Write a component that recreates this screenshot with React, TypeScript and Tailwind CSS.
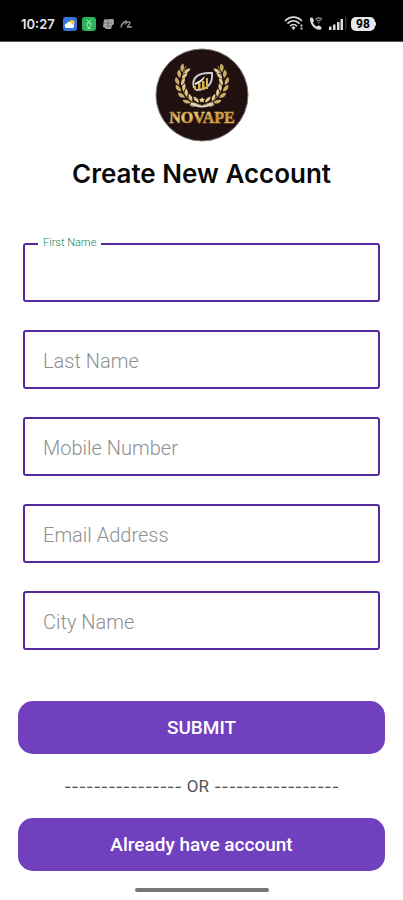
import type { InputHTMLAttributes } from "react";

function StatusBar() {
  return (
    <header className="flex h-[42px] items-center justify-between border-b border-neutral-600 bg-black pt-[6px] pr-[27px] pl-[21px] text-gray-200">
      <div className="flex items-center gap-[5px]">
        <span className="mr-[3px] font-[Inter,sans-serif] text-[13px] leading-4 font-semibold">10:27</span>
        {/* weather */}
        <svg className="size-[14px]" viewBox="0 0 14 14" aria-hidden="true">
          <rect width="14" height="14" rx="3" fill="#3475db" />
          <circle cx="9" cy="5.5" r="2.6" fill="#f5c451" />
          <path d="M3.500 11a2.300 2.300 0 0 1 0-4.500 3 3 0 0 1 5.600.7A2 2 0 0 1 10 11z" fill="#fff" />
        </svg>
        <svg className="size-[14px]" viewBox="0 0 14 14" aria-hidden="true">
          <rect width="14" height="14" rx="3" fill="#29b35b" />
          <path d="M4.500 2.500 7 5l2.500-2.500M5 6h4v2.500L7 11 5 8.500zM5 11.500h4" fill="none" stroke="#9be8b2" strokeWidth="1" />
        </svg>
        <svg className="ml-px h-3 w-[13px]" viewBox="0 0 13 12" aria-hidden="true">
          <path d="M2 1.500 11.500 1 12 6 10 7.500 9 11H4L3.500 10 1 9z" fill="#aaa" />
          <path d="M2 5h8M6 2v8M4 8h6" stroke="#666" strokeWidth=".7" />
        </svg>
        <svg className="h-3 w-3" viewBox="0 0 12 12" aria-hidden="true">
          <path d="M1 9.500C1.500 6 4 3.500 7 3M5 6.500C6 4 10 3 10 5c0 1.500-2 2-2.500 4H12" fill="none" stroke="#999" strokeWidth="1.300" />
        </svg>
      </div>
      <div className="flex items-center">
        <svg className="mr-[5px] h-[15px] w-5" viewBox="0 0 20 15" fill="none" stroke="#ddd" strokeWidth="1.600" aria-hidden="true">
          <path d="M1 5C6-.2 13-.2 18 5M3.400 7.600c3.700-3.600 8.500-3.600 12.200 0M6 10.200c2.200-2.200 4.800-2.200 7 0" />
          <path d="m7.500 11.500 2-1.200 2 1.200-2 2.500z" fill="#ddd" stroke="none" />
          <path d="M17.500 8.500v5" strokeWidth="1.800" strokeDasharray="2 1" />
        </svg>
        <svg className="mr-[5px] h-[15px] w-[14px]" viewBox="0 0 14 15" aria-hidden="true">
          <path d="M1 2 3.300 1.300 5.200 5 3.800 6.600c1 2 2.200 3.200 4 4.100l1.700-1.400 3.200 2-1 2.500C5.500 14.500.6 8 1 2z" fill="#ddd" />
          <path d="M6.500 3.500c2-2.300 4.500-2.300 6.500 0M8 5.200c1.200-1.300 2.400-1.300 3.600 0" fill="none" stroke="#999" strokeWidth="1.200" />
          <circle cx="9.800" cy="6.700" r=".8" fill="#aaa" />
        </svg>
        <svg className="mr-[4px] h-[15px] w-[19px]" viewBox="0 0 19 15" aria-hidden="true">
          <path d="M1 10.500h2.500V14H1zM5 8.500h2.500V14H5zM9 6h2.500v8H9zM12.500 3H15v11h-2.500z" fill="#ddd" />
          <path d="M17 1h1.500v13H17z" fill="#333" />
        </svg>
        <span className="flex h-[14px] w-[24px] items-center justify-center rounded-[5px] bg-gray-200 text-[12px] leading-[14px] font-bold text-black">
          98
        </span>
        <span className="h-1 w-px rounded-r bg-gray-300" />
      </div>
    </header>
  );
}

const LEAVES = [
  { x: 39, y: 59, r: -70 },
  { x: 32, y: 56, r: -52 },
  { x: 27, y: 50, r: -34 },
  { x: 24, y: 43, r: -16 },
  { x: 23, y: 36, r: 0 },
  { x: 25, y: 29, r: 16 },
  { x: 28, y: 23, r: 28 },
];

function LaurelBranch() {
  return (
    <g>
      <path d="M46 57C29 54 22 37 31 18" fill="none" stroke="#a5863f" strokeWidth="1" />
      {LEAVES.map((leaf) => (
        <g key={leaf.y} transform={`translate(${leaf.x} ${leaf.y - 3}) rotate(${leaf.r})`}>
          <path d="M1 4C-3 2-4-1-2-4 1-2 2 1 1 4z" fill="#c9ae69" />
          <path d="M3 4C3 0 4-2 7-3 7 1 6 3 3 4z" fill="#e0cc93" />
        </g>
      ))}
    </g>
  );
}

function Logo() {
  return (
    <svg className="size-[94px]" viewBox="0 0 94 94" role="img" aria-label="Novape">
      <defs>
        <linearGradient id="gold" x1="0" x2="1" y1="0" y2="1">
          <stop offset="0" stopColor="#a66b20" />
          <stop offset=".35" stopColor="#e9c777" />
          <stop offset=".6" stopColor="#c79137" />
          <stop offset="1" stopColor="#e2b75f" />
        </linearGradient>
      </defs>
      <circle cx="47" cy="47" r="46" fill="#20100f" stroke="#777" strokeWidth="1" />
      <LaurelBranch />
      <g transform="translate(94 0) scale(-1 1)">
        <LaurelBranch />
      </g>
      <path d="M36 55q11 7 22 0" fill="none" stroke="#ddd" strokeWidth="2" />
      <path d="m47 49 1 2h2l-1.500 1.500.5 2-2-1-2 1 .5-2L44 51h2z" fill="#ffe487" />
      {/* leaf emblem with a small bar chart */}
      <path d="M39 40C36 30 43 24 57 25c1 11-5 17-16 17" fill="none" stroke="#ccc" strokeWidth="2" />
      <path d="M40 35c4-2 7-4 10-7-1 4-4 7-10 9" fill="#eee" />
      <path d="M39 38h2v4h-2zM43 35h2.500v7H43zM47 33h2.500v9H47zM51 30h2v11h-2z" fill="#d6b24c" />
      <text
        x="47"
        y="75"
        textAnchor="middle"
        fill="url(#gold)"
        stroke="url(#gold)"
        strokeWidth=".5"
        className="font-['Liberation_Serif',serif] text-[16px] font-bold"
      >
        NOVAPE
      </text>
    </svg>
  );
}

interface FieldProps extends InputHTMLAttributes<HTMLInputElement> {
  id: string;
  label: string;
  floating?: boolean;
}

function Field({ id, label, floating = false, ...rest }: FieldProps) {
  return (
    <div className="relative">
      <input
        id={id}
        name={id}
        className="block h-[59px] w-full rounded-[3px] border-2 border-[#5429a0] bg-white px-[18px] text-[20px] text-neutral-800 outline-none"
        {...rest}
      />
      <label
        htmlFor={id}
        className={
          floating
            ? "absolute -top-[7px] left-[15px] bg-white px-[5px] text-[11px] leading-[14px] font-light text-[#0f8560]"
            : "absolute top-[19px] left-5 text-[20px] leading-6 font-light text-[#8f8f8f]"
        }
      >
        {label}
      </label>
    </div>
  );
}

const buttonClass =
  "h-[53px] w-full rounded-[15px] bg-[#7040bf] text-[19px] leading-6 font-medium text-white";

export default function App() {
  return (
    <div className="min-h-screen bg-white font-[Roboto,sans-serif]">
      <StatusBar />
      <main className="flex flex-col items-center px-[18px] pt-[6px]">
        <Logo />
        <h1 className="mt-[14px] font-[Inter,sans-serif] text-[26px] leading-9 font-semibold text-neutral-950">
          Create New Account
        </h1>
        <form className="mt-[51px] w-full" onSubmit={(e) => e.preventDefault()}>
          <div className="flex flex-col gap-7 px-[5px]">
            <Field id="firstName" label="First Name" floating />
            <Field id="lastName" label="Last Name" />
            <Field id="mobile" label="Mobile Number" type="tel" />
            <Field id="email" label="Email Address" type="email" />
            <Field id="city" label="City Name" />
          </div>
          <button type="submit" className={`mt-[51px] ${buttonClass}`}>
            SUBMIT
          </button>
        </form>
        <p className="my-5 flex items-center gap-[5px] text-[17px] leading-6 text-neutral-600">
          <span className="font-[Inter,sans-serif] text-[16px]">----------------</span>
          OR
          <span className="font-[Inter,sans-serif] text-[16px]">-----------------</span>
        </p>
        <button type="button" className={buttonClass}>
          Already have account
        </button>
        <div className="mt-[17px] h-1 w-[134px] rounded-sm bg-[#777]" />
      </main>
    </div>
  );
}
